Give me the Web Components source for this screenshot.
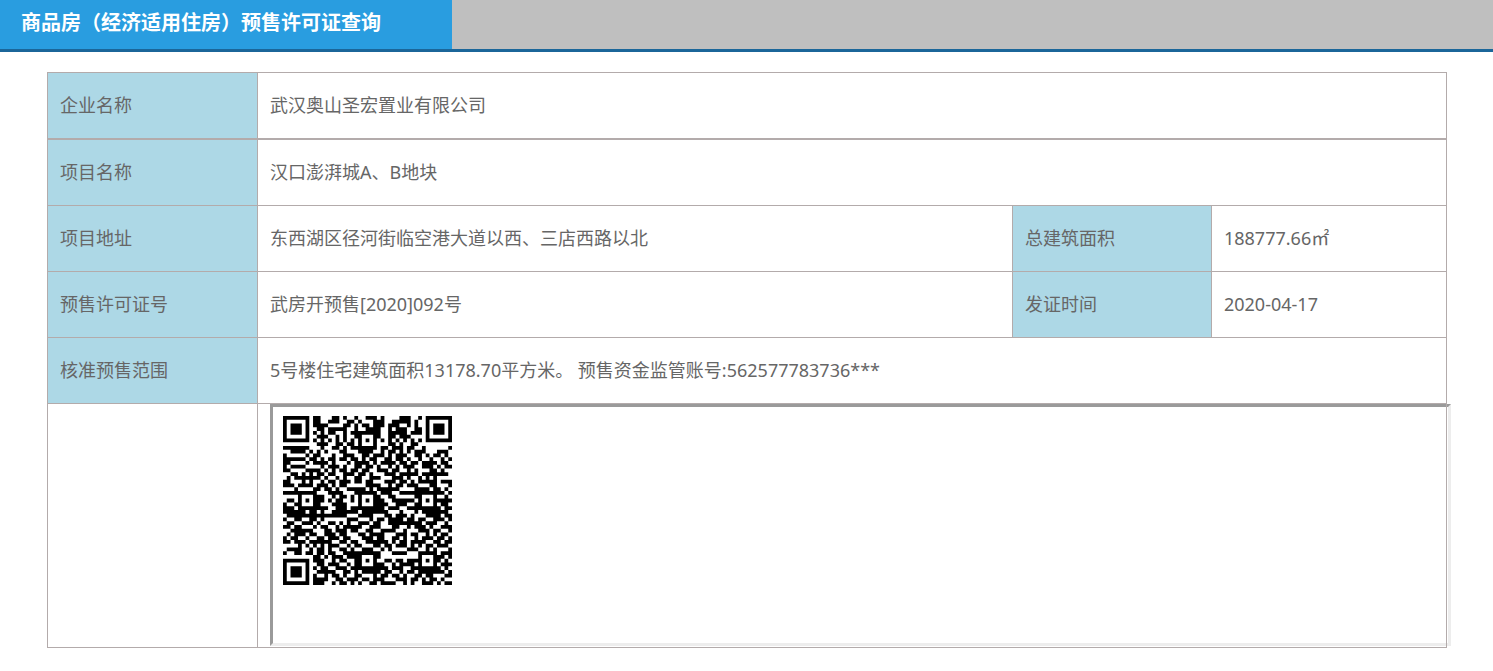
<!DOCTYPE html>
<html lang="zh-CN">
<head>
<meta charset="utf-8">
<title>商品房（经济适用住房）预售许可证查询</title>
<style>
  body {
    margin: 0;
    background: #fff;
    color: #666;
    font: 18px/24px "Noto Sans", "Noto Sans CJK SC", sans-serif;
  }
</style>
</head>
<body>
<title-bar>商品房（经济适用住房）预售许可证查询</title-bar>
<permit-record>
  <inset-frame><qr-code></qr-code></inset-frame>
</permit-record>

<script>
class TitleBar extends HTMLElement {
  constructor() {
    super();
    this.attachShadow({ mode: "open" }).innerHTML = `
      <style>
        :host { display: flex; background: #bfbfbf; border-bottom: 3px solid #1b6699; }
        h1 {
          box-sizing: border-box; width: 452px; height: 49px; margin: 0;
          padding: 8px 0 0 21px; background: #299de0; color: #fff;
          font: bold 20px/28px "Noto Sans CJK SC", sans-serif;
        }
      </style>
      <h1><slot></slot></h1>`;
  }
}

class PermitRecord extends HTMLElement {
  constructor() {
    super();
    this.attachShadow({ mode: "open" }).innerHTML = `
      <style>
        :host { display: block; margin: 20px 46px 0 47px; }
        table { width: 100%; table-layout: fixed; border-collapse: collapse; }
        .label { width: 210px; }
        .side { width: 199px; }
        .value { width: 235px; }
        th, td {
          box-sizing: border-box; height: 66px; padding: 0 12px 2px;
          border: 1px solid #b3abab; text-align: left; font-weight: 400;
        }
        th { background: #add8e6; }
        .code td { height: 244px; padding: 0 0 0 12px; vertical-align: top; }
      </style>
      <table>
        <colgroup><col class="label"><col></colgroup>
        <tr><th scope="row">企业名称</th><td>武汉奥山圣宏置业有限公司</td></tr>
      </table>
      <table>
        <colgroup><col class="label"><col><col class="side"><col class="value"></colgroup>
        <tr><th scope="row">项目名称</th><td colspan="3">汉口澎湃城A、B地块</td></tr>
        <tr><th scope="row">项目地址</th><td>东西湖区径河街临空港大道以西、三店西路以北</td>
          <th scope="row">总建筑面积</th><td>188777.66㎡</td></tr>
        <tr><th scope="row">预售许可证号</th><td>武房开预售[2020]092号</td>
          <th scope="row">发证时间</th><td>2020-04-17</td></tr>
        <tr><th scope="row">核准预售范围</th><td colspan="3">5号楼住宅建筑面积13178.70平方米。 预售资金监管账号:562577783736***</td></tr>
        <tr class="code"><td></td><td colspan="3"><slot></slot></td></tr>
      </table>`;
  }
}

class InsetFrame extends HTMLElement {
  constructor() {
    super();
    this.attachShadow({ mode: "open" }).innerHTML = `
      <style>
        :host {
          display: block; box-sizing: border-box; height: 242px;
          margin-right: -5px; padding: 9px 10px;
          border: 3px solid; border-color: #9a9a9a #ededed #ededed #9a9a9a;
        }
      </style>
      <slot></slot>`;
  }
}

const MODULES = [
  "000000001100011010010011101000011100110000000",
  "000000001100111001101000111001111101110000000",
  "000000001111000011010110111011100101010000000",
  "000000000110111110010011110010111001010000000",
  "000000001010110010111000110011111011110000000",
  "000000000111001010011111110011011100010000000",
  "000000001010101010101010101010101010101000000",
  "000000000111001101100001100011010011000000000",
  "111111100010011010111001101101110110010000001",
  "001111110101000110001111001011010101110001110",
  "100000001100010011100110111010111001101011010",
  "111111111010110110110101100110110100100100101",
  "110000001111010001011110101111011011011110110",
  "101111000010111010011011010010101110011101011",
  "110000011101010110110110011101100101000110100",
  "001101110110110011101101000111011111011111110",
  "010111011101001010011001110001110100101010000",
  "110001110010110111011011000111011010111110111",
  "111011110111010110000011110010110111000110001",
  "000100001101101001111101011111100001111011010",
  "111111011000111100011110001110011111000111101",
  "000011111110010110101111110011000001111110010",
  "011011000110101100101100011001111110110001111",
  "100110100100011110001101011100111001101010110",
  "111011000111001110111100011011100111110001011",
  "111111111010011111110111111100010001011111110",
  "011111111111111110001111000110111010001111011",
  "100110011010000001110001011011110110110011101",
  "011001010100110101001110110011111111101110010",
  "110110101011001011111001110001100101110100111",
  "001111110001101110110011001111001000111011001",
  "010111011001110110001101111000111011001010110",
  "101100100110111011000111011001101001011101101",
  "110111011111100110110011111101011011110011011",
  "111011001010111001011000110110111010101101110",
  "011111110110100110100111001010000111001010001",
  "110001010110110011110111010001111000110110111",
  "000000001101011101110011110000000000110001101",
  "000000001110010110011111000110110111000111010",
  "000000000110111001011110011001011110111010111",
  "000000001011001110111100011101110011100011010",
  "000000000111110011010111110110010110111111101",
  "000000001001011010011000101101101001101100011",
  "000000001111001101110110111000111011010110100",
  "000000001110010110101001101111001010011101011"
];

class QrCode extends HTMLElement {
  constructor() {
    super();
    const grid = MODULES.map(row => [...row].map(Number));
    const last = grid.length - 1;
    // Concentric squares: dark rings at the given distances from the centre.
    const rings = (cx, cy, radius, lightAt) => {
      for (let y = cy - radius; y <= cy + radius; y++)
        for (let x = cx - radius; x <= cx + radius; x++)
          if (grid[y] && x >= 0 && x <= last)
            grid[y][x] = lightAt.includes(Math.max(Math.abs(x - cx), Math.abs(y - cy))) ? 0 : 1;
    };
    for (let i = 8; i < last - 7; i++) grid[6][i] = grid[i][6] = 1 - i % 2;
    for (const [x, y] of [[22, 6], [6, 22], [22, 22], [38, 22], [22, 38], [38, 38]]) rings(x, y, 2, [1]);
    for (const [x, y] of [[3, 3], [last - 3, 3], [3, last - 3]]) rings(x, y, 4, [2, 4]);
    // Version block beside the top-right finder and its transpose at bottom left.
    [..."001010010011111000"].forEach((bit, i) => {
      const a = Math.floor(i / 3), b = last - 10 + i % 3;
      grid[a][b] = grid[b][a] = Number(bit);
    });
    let path = "";
    grid.forEach((row, y) => {
      for (let x = 0; x <= last; x++) {
        if (!row[x]) continue;
        let end = x;
        while (row[end]) end++;
        path += `M${x} ${y}H${end}V${y + 1}H${x}Z`;
        x = end;
      }
    });
    this.attachShadow({ mode: "open" }).innerHTML = `
      <style>
        :host { display: block; width: 169px; height: 169px; }
        svg { display: block; width: 100%; height: 100%; }
      </style>
      <svg viewBox="0 0 45 45" role="img" aria-label="二维码"><path d="${path}"/></svg>`;
  }
}

customElements.define("title-bar", TitleBar);
customElements.define("permit-record", PermitRecord);
customElements.define("inset-frame", InsetFrame);
customElements.define("qr-code", QrCode);
</script>
</body>
</html>
